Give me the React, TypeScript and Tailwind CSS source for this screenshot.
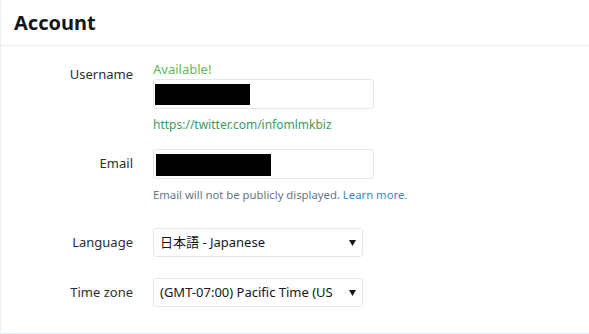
import React from "react";

const font = { fontFamily: '"Noto Sans", "Noto Sans CJK JP", sans-serif' };

const Caret = () => (
  <svg width="7" height="6" viewBox="0 0 7 6" className="shrink-0">
    <path d="M0 0h7L3.5 6z" fill="#14171a" />
  </svg>
);

const Select = ({ value }: { value: string }) => (
  <div className="flex h-[29px] w-[210px] items-center rounded-[3px] border border-[#e1e8ed] bg-white pl-[6px] pr-[6px]">
    <div className="min-w-0 flex-1 whitespace-nowrap pr-[8px] text-[13px] text-[#14171a]">
      {value}
    </div>
    <Caret />
  </div>
);

const App = () => {
  return (
    <div className="h-[334px] w-[589px] overflow-hidden bg-white" style={font}>
      <div className="h-[334px] border-b border-l border-[#e6ecf0]">
        {/* Header */}
        <div className="flex h-[46px] items-center border-b border-[#e6ecf0] pl-[13px]">
          <h1 className="text-[20px] font-bold leading-none text-[#14171a]">Account</h1>
        </div>

        <div className="grid grid-cols-[132px_1fr] gap-x-[20px] pt-[15px]">
          {/* Username */}
          <div className="pt-[4px] text-right text-[13px] leading-[18px] text-[#292f33]">Username</div>
          <div>
            <div className="text-[13px] leading-[16px] text-[#5cb85c]">Available!</div>
            <div className="mt-[2px] h-[30px] w-[221px] rounded-[3px] border border-[#e1e8ed] pl-[1px] pt-[4px]">
              <div className="h-[21px] w-[95px] bg-black" />
            </div>
            <div className="mt-[8px] text-[12px] leading-[16px] text-[#3d9a63]">
              https://twitter.com/infomlmkbiz
            </div>
          </div>

          {/* Email */}
          <div className="mt-[16px] flex h-[30px] items-center justify-end text-[13px] text-[#292f33]">Email</div>
          <div className="mt-[16px]">
            <div className="h-[30px] w-[221px] rounded-[3px] border border-[#e1e8ed] pl-[2px] pt-[4px]">
              <div className="h-[22px] w-[115px] bg-black" />
            </div>
            <div className="mt-[8px] text-[11.3px] leading-[16px] text-[#657786]">
              Email will not be publicly displayed.{" "}
              <span className="text-[#3b88c3]">Learn more.</span>
            </div>
          </div>

          {/* Language */}
          <div className="mt-[25px] flex h-[29px] items-center justify-end text-[13px] text-[#292f33]">Language</div>
          <div className="mt-[25px]">
            <Select value="日本語 - Japanese" />
          </div>

          {/* Time zone */}
          <div className="mt-[21px] flex h-[29px] items-center justify-end text-[13px] text-[#292f33]">Time zone</div>
          <div className="mt-[21px]">
            <Select value="(GMT-07:00) Pacific Time (US" />
          </div>
        </div>
      </div>
    </div>
  );
};

export default App;
